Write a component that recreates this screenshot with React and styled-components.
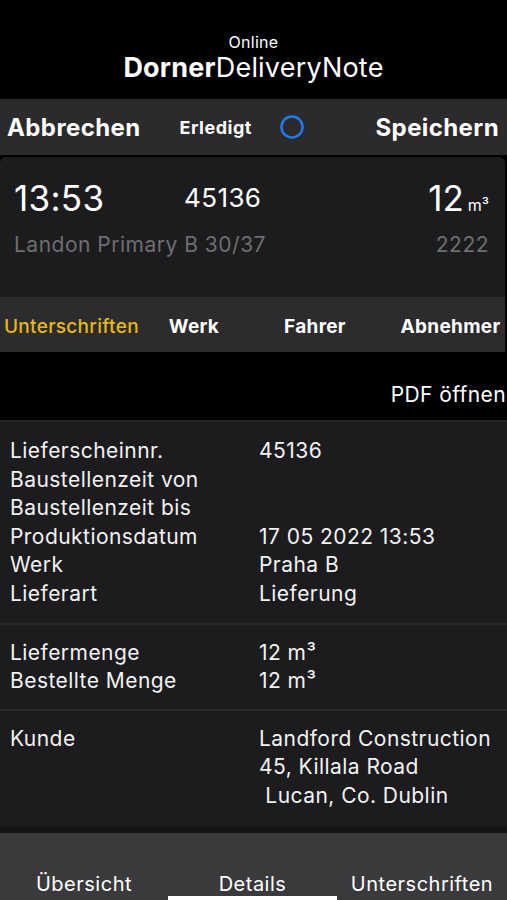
import styled, { createGlobalStyle } from "styled-components";

const GlobalStyle = createGlobalStyle`
  html, body {
    margin: 0;
    padding: 0;
    background: #000;
    font-family: "Inter", "Noto Sans", sans-serif;
    color: #fff;
  }
`;

const Screen = styled.div`
  width: 507px;
  height: 900px;
  display: flex;
  flex-direction: column;
  background: #000;
  overflow: hidden;
`;

const Header = styled.header`
  height: 99px;
  display: flex;
  flex-direction: column;
  align-items: center;
  justify-content: flex-end;
  gap: 5px;
  padding-bottom: 19px;
  box-sizing: border-box;
`;

const Subtitle = styled.div`
  font-size: 16px;
  line-height: 18px;
  letter-spacing: 0.3px;
`;

const Title = styled.div`
  font-size: 27px;
  line-height: 24px;
  letter-spacing: 0.2px;

  b {
    font-weight: 700;
  }
`;

const Toolbar = styled.div`
  height: 56px;
  background: #2b2b2d;
  display: flex;
  align-items: center;
  padding: 0 8px 0 7px;
`;

const ToolButton = styled.div`
  font-size: 24px;
  font-weight: 700;
  letter-spacing: 0.4px;
`;

const Done = styled.div`
  flex: 1;
  display: flex;
  align-items: center;
  padding-left: 39px;
  gap: 27px;
  font-size: 18px;
  font-weight: 700;
  letter-spacing: 0.5px;
`;

const Card = styled.div`
  margin-top: 2px;
  margin-right: 2px;
  background: #1c1c1e;
  border-radius: 6px 6px 0 0;
  overflow: hidden;
`;

const CardBody = styled.div`
  height: 140px;
  padding: 20px 16px 0 14px;
  box-sizing: border-box;
  display: grid;
  grid-template-columns: 170px 1fr auto;
  grid-template-rows: 55px 40px;
  align-items: baseline;
`;

const Time = styled.div`
  font-size: 35px;
  letter-spacing: 0.3px;
`;

const Number = styled.div`
  font-size: 26px;
  letter-spacing: 0.4px;
  align-self: start;
  padding-top: 5px;
`;

const Amount = styled.div`
  font-size: 35px;
  text-align: right;

  small {
    font-size: 16px;
    margin-left: 4px;
  }
`;

const Muted = styled.div`
  grid-column: ${(p) => p.$col};
  font-size: 21px;
  letter-spacing: 0.5px;
  color: #6e6e70;
  text-align: ${(p) => p.$align || "left"};
`;

const SubTabs = styled.div`
  height: 55px;
  background: #2c2c2e;
  display: grid;
  grid-template-columns: 150px 80px 162px 1fr;
  align-items: center;
  padding-left: 4px;
`;

const SubTab = styled.div`
  font-size: 19px;
  font-weight: ${(p) => (p.$active ? 500 : 700)};
  letter-spacing: 0.3px;
  color: ${(p) => (p.$active ? "#e8b90f" : "#fff")};
  text-align: ${(p) => (p.$active ? "left" : "center")};
  padding-top: 4px;
`;

const PdfRow = styled.div`
  height: 68px;
  display: flex;
  align-items: flex-end;
  justify-content: flex-end;
  padding-bottom: 13px;
  padding-right: 1px;
  box-sizing: border-box;
  font-size: 21px;
  letter-spacing: 0.4px;
`;

const Details = styled.div`
  background: #1c1c1e;
  border-top: 2px solid #262628;
`;

const Section = styled.div`
  padding: ${(p) => p.$pad};
  display: grid;
  grid-template-columns: 249px 1fr;
  font-size: 21px;
  letter-spacing: 0.45px;
  line-height: 28.6px;
  color: #f2f2f2;

  & + & {
    border-top: 2px solid #2a2a2c;
  }
`;

const Value = styled.div`
  white-space: pre;
`;

const BottomBar = styled.div`
  flex: 1;
  border-top: 6px solid #141414;
  background: #3a3a3c;
  display: grid;
  grid-template-columns: 168px 169px 1fr;
  align-items: end;
`;

const BottomTab = styled.div`
  font-size: 20px;
  letter-spacing: 0.5px;
  text-align: center;
  padding-bottom: 0;
  border-bottom: 4px solid ${(p) => (p.$active ? "#fff" : "transparent")};
  line-height: 24px;
`;

const sections = [
  {
    pad: "15px 0 14px 10px",
    rows: [
      ["Lieferscheinnr.", "45136"],
      ["Baustellenzeit von", ""],
      ["Baustellenzeit bis", ""],
      ["Produktionsdatum", "17 05 2022 13:53"],
      ["Werk", "Praha B"],
      ["Lieferart", "Lieferung"],
    ],
  },
  {
    pad: "14px 0 13px 10px",
    rows: [
      ["Liefermenge", "12 m³"],
      ["Bestellte Menge", "12 m³"],
    ],
  },
  {
    pad: "14px 0 16px 10px",
    rows: [["Kunde", "Landford Construction\n45, Killala Road\n Lucan, Co. Dublin"]],
  },
];

export default function App() {
  return (
    <>
      <GlobalStyle />
      <Screen>
        <Header>
          <Subtitle>Online</Subtitle>
          <Title>
            <b>Dorner</b>DeliveryNote
          </Title>
        </Header>

        <Toolbar>
          <ToolButton>Abbrechen</ToolButton>
          <Done>
            Erledigt
            <svg width="26" height="26" viewBox="0 0 26 26">
              <circle cx="13" cy="13" r="10.5" fill="none" stroke="#1f7ae8" strokeWidth="2.6" />
            </svg>
          </Done>
          <ToolButton>Speichern</ToolButton>
        </Toolbar>

        <Card>
          <CardBody>
            <Time>13:53</Time>
            <Number>45136</Number>
            <Amount>
              12<small>m³</small>
            </Amount>
            <Muted $col="1 / 3">Landon Primary B 30/37</Muted>
            <Muted $col="3" $align="right">
              2222
            </Muted>
          </CardBody>
          <SubTabs>
            <SubTab $active>Unterschriften</SubTab>
            <SubTab>Werk</SubTab>
            <SubTab>Fahrer</SubTab>
            <SubTab>Abnehmer</SubTab>
          </SubTabs>
        </Card>

        <PdfRow>PDF öffnen</PdfRow>

        <Details>
          {sections.map((section, i) => (
            <Section key={i} $pad={section.pad}>
              {section.rows.flatMap(([label, value]) => [
                <div key={label}>{label}</div>,
                <Value key={label + "-v"}>{value}</Value>,
              ])}
            </Section>
          ))}
        </Details>

        <BottomBar>
          <BottomTab>Übersicht</BottomTab>
          <BottomTab $active>Details</BottomTab>
          <BottomTab>Unterschriften</BottomTab>
        </BottomBar>
      </Screen>
    </>
  );
}
